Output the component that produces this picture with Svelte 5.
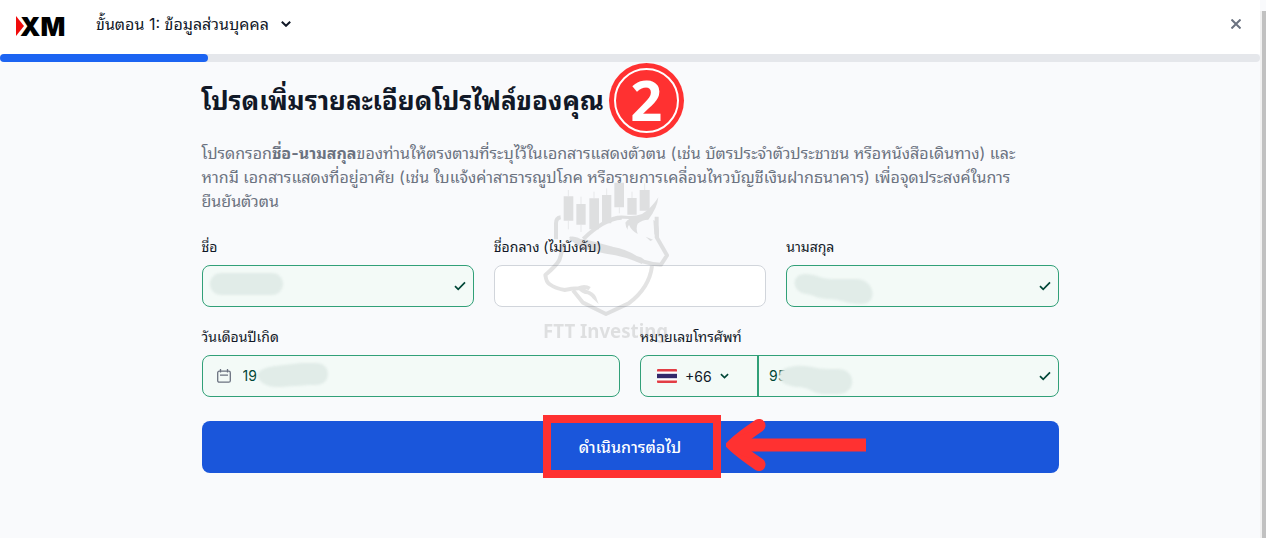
<script lang="ts">
	let firstName = '';
	let middleName = '';
	let lastName = '';
	let birthDate = '19';
	let dialCode = '+66';
	let phone = '95';

	const progress = 16.5;

	function submitProfile(event: SubmitEvent) {
		event.preventDefault();
	}
</script>

{#snippet check()}
	<svg class="check" viewBox="0 0 12 10" aria-hidden="true">
		<path d="M1 5.2 4.2 8.4 11 1.4" />
	</svg>
{/snippet}

<div class="page">
	<div class="content">
		<header>
			<a class="logo" href="#home" aria-label="XM">
				<svg viewBox="0 0 48 20" aria-hidden="true">
					<path d="M0 0 8 10 0 20Z" fill="#f00b0b" />
					<text x="4" y="20">XM</text>
				</svg>
			</a>
			<button class="step" type="button">
				ขั้นตอน 1: ข้อมูลส่วนบุคคล
				<svg viewBox="0 0 10 6" aria-hidden="true"><path d="m.8.8 4.2 4 4.2-4" /></svg>
			</button>
			<button class="close" type="button" aria-label="ปิด">
				<svg viewBox="0 0 10 10" aria-hidden="true"><path d="m.5.5 9 9m0-9-9 9" /></svg>
			</button>
		</header>

		<div class="track" role="progressbar" aria-valuenow={progress} aria-label="ขั้นตอน 1">
			<div class="bar" style="width: {progress}%"></div>
		</div>

		<main>
			<div class="title">
				<h1>โปรดเพิ่มรายละเอียดโปรไฟล์ของคุณ</h1>
				<span class="badge"><span>2</span></span>
			</div>

			<p>
				โปรดกรอก<strong>ชื่อ-นามสกุล</strong>ของท่านให้ตรงตามที่ระบุไว้ในเอกสารแสดงตัวตน (เช่น บัตรประจำตัวประชาชน หรือหนังสือเดินทาง) และ<br />
				หากมี เอกสารแสดงที่อยู่อาศัย (เช่น ใบแจ้งค่าสาธารณูปโภค หรือรายการเคลื่อนไหวบัญชีเงินฝากธนาคาร) เพื่อจุดประสงค์ในการ<br />
				ยืนยันตัวตน
			</p>

			<form on:submit={submitProfile}>
				<div class="row three">
					<div class="field">
						<label for="first">ชื่อ</label>
						<div class="box valid">
							<input id="first" type="text" bind:value={firstName} />
							{@render check()}
							<svg class="smudge" viewBox="0 0 90 40" aria-hidden="true">
								<rect x="7" y="7" width="73" height="22" rx="11" />
							</svg>
						</div>
					</div>
					<div class="field">
						<label for="middle">ชื่อกลาง (ไม่บังคับ)</label>
						<div class="box">
							<input id="middle" type="text" bind:value={middleName} />
						</div>
					</div>
					<div class="field">
						<label for="last">นามสกุล</label>
						<div class="box valid">
							<input id="last" type="text" bind:value={lastName} />
							{@render check()}
							<svg class="smudge" viewBox="0 0 90 40" aria-hidden="true">
								<path d="M18 8C29 8 34 13 45 13h24c19 0 23 25 5 25-15 0-20-5-33-5-10 0-14-4-22-5C4 26 4 8 18 8Z" />
							</svg>
						</div>
					</div>
				</div>

				<div class="row two">
					<div class="field">
						<label for="birth">วันเดือนปีเกิด</label>
						<div class="box valid">
							<svg class="calendar" viewBox="0 0 14 14" aria-hidden="true">
								<rect x=".7" y="2.2" width="12.6" height="11" rx="1.5" />
								<path d="M3.5 0v3.5M10.5 0v3.5M3 6.2h8" />
							</svg>
							<input id="birth" type="text" bind:value={birthDate} />
							<svg class="smudge after-date" viewBox="0 0 90 40" aria-hidden="true">
								<path d="M20 10c12-1 20-3 31-3h10c16 0 16 22 0 22-14 0-28 2-39 2C10 31 5 26 2 20c1-6 9-9 18-10Z" />
							</svg>
						</div>
					</div>
					<div class="field">
						<label for="phone">หมายเลขโทรศัพท์</label>
						<div class="box valid phone">
							<div class="country">
								<svg class="flag" viewBox="0 0 20 14" aria-hidden="true">
									<rect width="20" height="14" rx="1" fill="#e23d45" />
									<path d="M0 2.5h20v9H0z" fill="#fff" />
									<path d="M0 4.8h20v4.4H0z" fill="#33296b" />
								</svg>
								<select bind:value={dialCode} aria-label="รหัสประเทศ">
									<option>+66</option>
								</select>
								<svg class="caret" viewBox="0 0 10 6" aria-hidden="true"><path d="m1 1 4 3.8L9 1" /></svg>
							</div>
							<input id="phone" type="tel" bind:value={phone} />
							{@render check()}
							<svg class="smudge after-code" viewBox="0 0 90 40" aria-hidden="true">
								<path d="M21 10c14-1 18 3 33 3h9c19 0 19 25 0 25H50c-13 0-14-7-29-7C10 29 4 26 4 20s7-9 17-10Z" />
							</svg>
						</div>
					</div>
				</div>

				<div class="action">
					<button class="submit" type="submit">ดำเนินการต่อไป</button>
					<div class="highlight" aria-hidden="true"></div>
					<svg class="arrow" viewBox="0 0 140 54" aria-hidden="true">
						<path d="M12 20.500h128v13H12z" fill="#ff3131" />
						<path d="M33 7.500Q16 19 7.500 27 16 35 33 46.500" />
						<path d="M1 27Q2 23 6 20l18-6v26L6 34Q2 31 1 27Z" fill="#ff3131" stroke="none" />
					</svg>
				</div>
			</form>

			<svg class="watermark" viewBox="0 0 540 525" aria-hidden="true">
				<path d="M131 64h29v73h-29zM169 87h28v62h-28zM208 70h29v93h-29zM246 60h28v85h-28zM283 23h29v74h-29zM322 69h28v50h-28zM359 45h30v62h-30z" />
				<g class="lines">
					<path class="wick" d="M145 45v19m0 73v26M183 65v22m0 62v22M222 50v20M260 40v20M298 5v18m0 74v18M336 50v19M374 25v20" />
					<path d="M122 127q-14 2-14 18v48M410 125v62l31 54-18 28q-25 0-52-9-8-8-24-12-30-20-70-27l-78-21q-26-2-50-10M131 205q-5 26-13 50-8 16-42 45 3 22 12 27 18 13 46 18 20-5 42-5 18-9 33 1" />
					<path d="m159 346 30 37 69 34 68-32q62-46 70-112M190 192q60-60 115-64" />
				</g>
				<path d="M250 138q35-22 76-15 22 1 40-6 29-18 49-50-3 33-30 67-18 0-32 12-6 14 0 31-18-9-26-27-6 6-3 16-8-12-8-23 6-9 12-11-40-3-78 6ZM400 135q15 5 17 30v25l-14-12ZM147 186q20-6 40 9l92 25 60 24 32 15-5 8q-60-26-108-31l-55-12q-42-13-56-38ZM173 338q14-5 28 7 20 7 27 20l8 22-17-16q-11-15-24-14-18-7-22-19ZM377 185l22 9-8 4Z" />
				<text x="69" y="490">FTT Investing</text>
			</svg>
		</main>
	</div>
	<div class="scrollbar" aria-hidden="true"></div>
</div>

<style>
	:global(body) {
		margin: 0;
		background: #f9fafc;
	}

	.page {
		display: flex;
		min-height: 100vh;
		font-family: Inter, Waree, 'Noto Sans Thai Looped', 'Noto Looped Thai', Kinnari, Garuda, sans-serif;
		color: #111827;
	}

	.content {
		flex: 1;
		min-width: 0;
	}

	.scrollbar {
		width: 4px;
		margin-top: 11px;
		border-left: 2px solid #f1f1f1;
		background: #c1c1c1;
	}

	button,
	input,
	select {
		font: inherit;
		color: inherit;
	}

	svg {
		flex: none;
		fill: none;
	}

	header {
		display: flex;
		align-items: center;
		box-sizing: border-box;
		height: 54px;
		padding: 0 16px 6px;
		background: #fff;
	}

	.logo {
		padding-top: 4px;
	}

	.logo svg {
		display: block;
		width: 48px;
		height: 20px;
		overflow: visible;
	}

	.logo text {
		font-size: 26px;
		font-weight: 900;
		fill: #000;
	}

	.step {
		display: flex;
		align-items: center;
		gap: 12px;
		margin-left: 32px;
		padding: 0;
		border: 0;
		background: none;
		font-size: 16px;
		line-height: 24px;
		white-space: nowrap;
		cursor: pointer;
	}

	.step svg {
		width: 10px;
		height: 6px;
		stroke: #111827;
		stroke-width: 2;
	}

	.close {
		display: flex;
		margin-left: auto;
		padding: 3px;
		border: 0;
		background: none;
		cursor: pointer;
	}

	.close svg {
		width: 10px;
		height: 10px;
		stroke: #6b7280;
		stroke-width: 2;
	}

	.track {
		height: 8px;
		border-radius: 4px;
		background: #e5e7eb;
	}

	.bar {
		height: 100%;
		border-radius: 4px;
		background: #1c64f2;
	}

	main {
		position: relative;
		max-width: 857px;
		margin: 0 auto;
		padding-bottom: 64px;
	}

	.title {
		display: flex;
		align-items: center;
		gap: 5px;
		height: 77px;
		margin-bottom: 2px;
	}

	h1 {
		margin: 0;
		font-size: 26px;
		line-height: 32px;
		font-weight: 700;
		white-space: nowrap;
	}

	.badge {
		display: flex;
		box-sizing: border-box;
		width: 75px;
		height: 75px;
		padding: 5px;
		border-radius: 50%;
		background: #ff3131;
	}

	.badge span {
		flex: 1;
		border: 2px solid #fff;
		border-radius: 50%;
		color: #fff;
		font: 700 56px/58px 'Open Sans', sans-serif;
		text-align: center;
	}

	p {
		margin: 0;
		font-size: 16px;
		line-height: 24px;
		white-space: nowrap;
		color: #6b7280;
	}

	form {
		margin-top: 24px;
	}

	.row {
		display: grid;
		gap: 20px;
		margin-bottom: 20px;
	}

	.three {
		grid-template-columns: repeat(3, 1fr);
	}

	.two {
		grid-template-columns: repeat(2, 1fr);
		margin-bottom: 24px;
	}

	label {
		display: block;
		margin-bottom: 8px;
		font-size: 14px;
		line-height: 20px;
	}

	.box {
		position: relative;
		display: flex;
		align-items: center;
		box-sizing: border-box;
		height: 42px;
		border: 1px solid #d1d5db;
		border-radius: 8px;
		background: #fff;
	}

	.valid {
		border-color: #31a078;
		background: #f3faf7;
		color: #014737;
	}

	input {
		flex: 1;
		min-width: 0;
		padding: 0 10px;
		border: 0;
		outline: 0;
		background: none;
		font-size: 14px;
		line-height: 20px;
	}

	.check {
		width: 12px;
		height: 10px;
		margin-right: 7px;
		stroke: #014737;
		stroke-width: 1.7;
	}

	.calendar {
		width: 14px;
		height: 14px;
		margin: 0 2px 0 14px;
		stroke: #6b7280;
		stroke-width: 1.3;
	}

	.smudge {
		position: absolute;
		top: 0;
		left: 0;
		width: 90px;
		height: 40px;
		fill: #e1ece8;
		filter: blur(1px);
		pointer-events: none;
	}

	.after-date {
		left: 52px;
	}

	.after-code {
		left: 134px;
	}

	.country {
		display: flex;
		align-items: center;
		box-sizing: border-box;
		width: 118px;
		height: 40px;
		padding-left: 16px;
		border-right: 2px solid #31a078;
	}

	.flag {
		width: 20px;
		height: 14px;
	}

	select {
		width: 28px;
		margin: 0 7px 0 8px;
		padding: 0;
		border: 0;
		outline: 0;
		background: none;
		appearance: none;
		font-size: 14px;
		color: #111827;
	}

	.caret {
		width: 9px;
		height: 6px;
		stroke: #014737;
		stroke-width: 1.8;
	}

	.action {
		position: relative;
	}

	.submit {
		display: block;
		width: 100%;
		height: 52px;
		padding: 0 0 2px;
		border: 0;
		border-radius: 8px;
		background: #1a56db;
		color: #fff;
		font-size: 16px;
		font-weight: 500;
		cursor: pointer;
	}

	.highlight {
		position: absolute;
		top: -6px;
		left: calc(50% - 87px);
		box-sizing: border-box;
		width: 178px;
		height: 63px;
		border: 8px solid #ff3131;
		pointer-events: none;
	}

	.arrow {
		position: absolute;
		top: -3px;
		left: calc(50% + 96px);
		width: 140px;
		height: 54px;
		stroke-width: 13;
		stroke-linecap: round;
		pointer-events: none;
	}

	.arrow path:nth-child(2) {
		stroke: #ff3131;
	}

	.watermark {
		position: absolute;
		top: 113px;
		left: calc(50% - 110px);
		width: 180px;
		height: 175px;
		fill: #777;
		opacity: 0.2;
		pointer-events: none;
	}

	.lines {
		fill: none;
		stroke: #777;
		stroke-width: 12;
		stroke-linejoin: round;
	}

	.lines .wick {
		stroke-width: 2;
	}

	.watermark text {
		font: 700 56px 'Noto Sans', sans-serif;
	}
</style>
